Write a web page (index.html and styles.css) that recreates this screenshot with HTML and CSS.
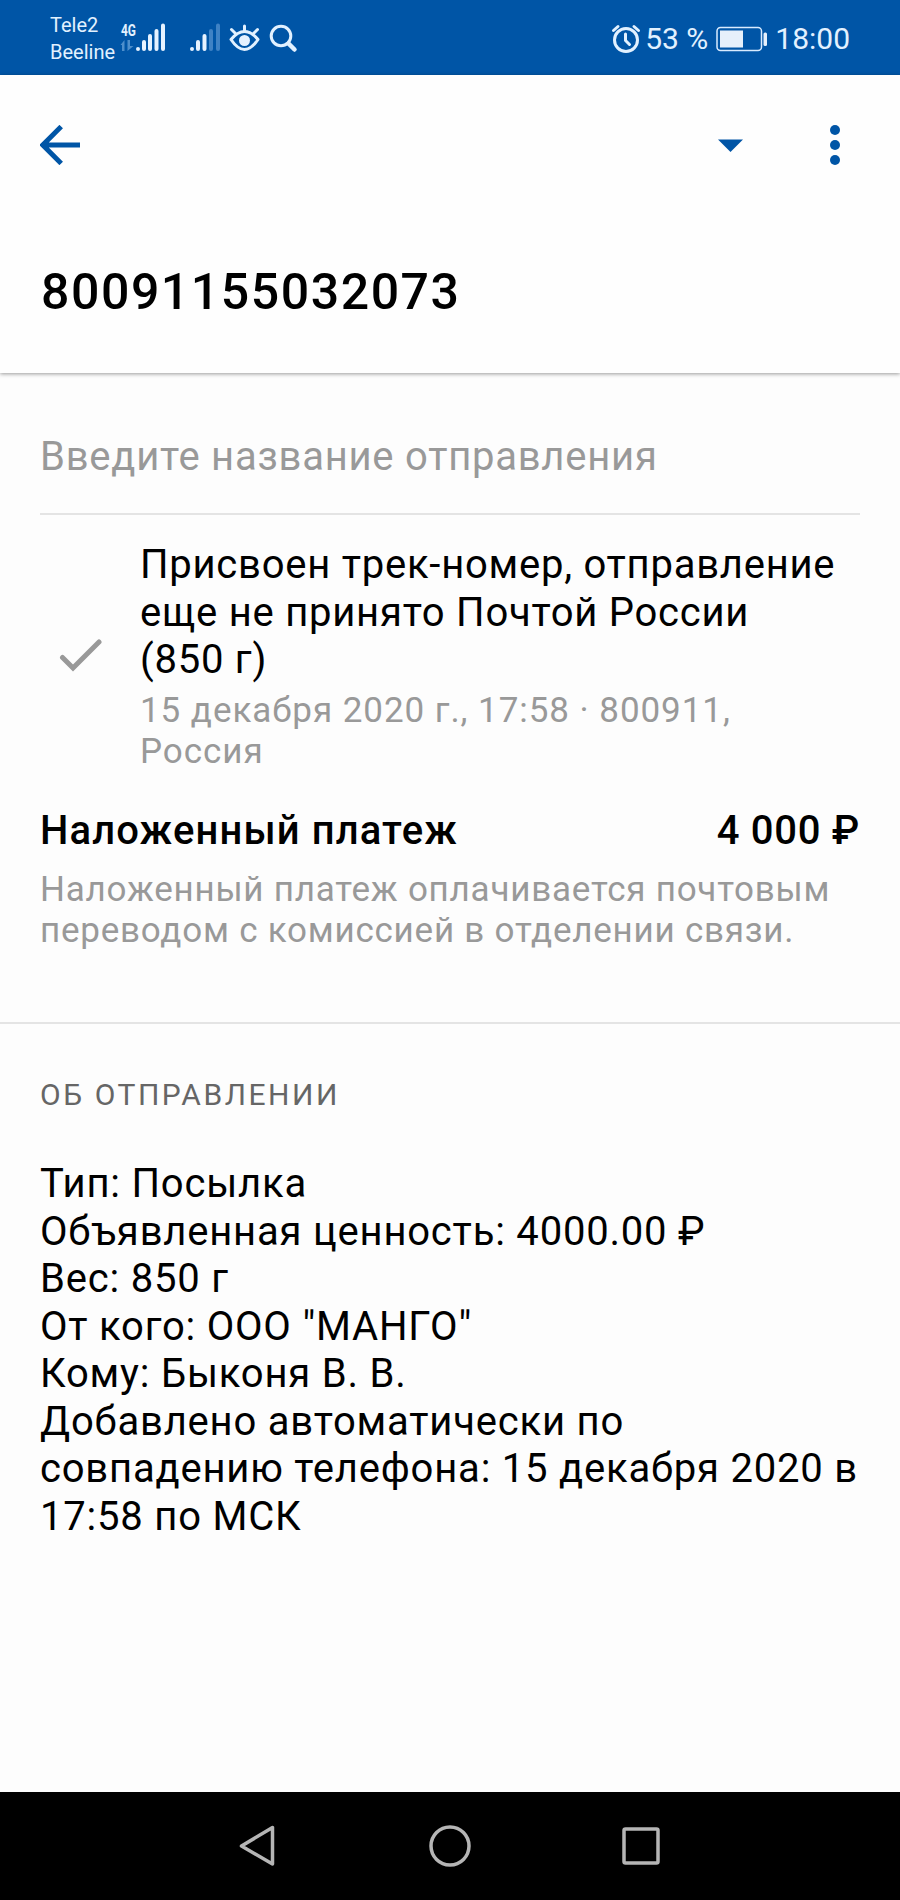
FILE: index.html
```
<!DOCTYPE html>
<html lang="ru">
<head>
  <meta charset="UTF-8" />
  <meta name="viewport" content="width=device-width, initial-scale=1.0"/>
  <title>Отправление 80091155032073</title>
  <link rel="stylesheet" href="styles.css">
</head>
<body>
  <!-- Status bar -->
  <div class="status-bar">
    <div class="carriers">
      <span>Tele2</span>
      <span>Beeline</span>
    </div>
    <svg class="status-icons" width="180" height="75" viewBox="120 0 180 75">
      <text x="121" y="36" class="net-label" textLength="15" lengthAdjust="spacingAndGlyphs">4G</text>
      <g fill="#4f8fcb">
        <path d="M120.500 45l4-5v11h-2.500v-6z"/>
        <path d="M127.500 40h2.500v6h3.500l-6 5z"/>
      </g>
      <g class="bars">
        <path d="M138 49v0M144 42v7M150 36v13M156.500 31v18M163 25.500V49"/>
        <path d="M192 49v0M198 42v7M204.500 36v13"/>
        <path class="dim" d="M211 31v18M218 25.500V49"/>
      </g>
      <g class="outline">
        <path d="M231 39.500C236 33.500 240 31.500 244.500 31.500S253 33.500 258 39.500C253 47 249 49.500 244.500 49.500S236 47 231 39.500z"/>
        <path d="M244.500 31v-5M235.500 33.500l-4-4M253.500 33.500l4-4"/>
        <circle cx="281" cy="36" r="9.800"/>
      </g>
      <circle cx="244.500" cy="40.500" r="5.500" fill="#e6f2ff"/>
      <path d="M288.500 43.500l6 6" class="handle"/>
    </svg>
    <div class="status-right">
      <svg width="30" height="32" viewBox="612 22 30 32" class="outline">
        <circle cx="627" cy="39" r="11.500"/>
        <path d="M614.500 29.500l4.500-4M639.500 29.500l-4.500-4"/>
        <path d="M626.500 33v6.500l4 4"/>
      </svg>
      <span class="percent">53 %</span>
      <svg class="battery" width="52" height="26" viewBox="716 25 52 26">
        <rect x="717" y="26.500" width="44.500" height="23" rx="3.500" fill="none" stroke="#d8ebff" stroke-width="1.500"/>
        <rect x="720" y="29.500" width="23" height="17" fill="#e6f0fb"/>
        <rect x="763.500" y="31.500" width="3.500" height="13.500" rx="1.500" fill="#e6f0fb"/>
      </svg>
      <span class="clock">18:00</span>
    </div>
  </div>

  <!-- Header -->
  <header class="header">
    <div class="toolbar">
      <svg width="40" height="40" viewBox="0 0 40 40">
        <path d="M40 20H4M21.200 1.600L2.800 20l18.400 18.400" fill="none" stroke="#0055a6" stroke-width="5"/>
      </svg>
      <div class="toolbar-actions">
        <svg width="25" height="13" viewBox="0 0 25 13"><path d="M0 0.500h25L12.500 13z" fill="#0055a6"/></svg>
        <svg width="10" height="40" viewBox="0 0 10 40" fill="#0055a6">
          <circle cx="5" cy="5" r="5"/>
          <circle cx="5" cy="20" r="5"/>
          <circle cx="5" cy="35" r="5"/>
        </svg>
      </div>
    </div>
    <h1 class="track-number">80091155032073</h1>
  </header>

  <!-- Content -->
  <main class="content">
    <div class="name-field">Введите название отправления</div>

    <div class="event">
      <svg class="check" width="44" height="34" viewBox="0 0 44 34">
        <path d="M3.500 18.500l10.500 10.500L40 3" />
      </svg>
      <div>
        <div class="text">Присвоен трек-номер, отправление<br>еще не принято Почтой России<br>(850 г)</div>
        <div class="hint event-date">15 декабря 2020 г., 17:58 · 800911,<br>Россия</div>
      </div>
    </div>

    <div class="payment">
      <span class="payment-name">Наложенный платеж</span>
      <span>4 000 ₽</span>
    </div>
    <div class="hint payment-note">Наложенный платеж оплачивается почтовым<br>переводом с комиссией в отделении связи.</div>

    <section class="about">
      <h2 class="about-title">ОБ ОТПРАВЛЕНИИ</h2>
      <div class="text">
        Тип: Посылка<br>
        Объявленная ценность: 4000.00 ₽<br>
        Вес: 850 г<br>
        От кого: ООО "МАНГО"<br>
        Кому: Быконя В. В.<br>
        Добавлено автоматически по<br>
        совпадению телефона: 15 декабря 2020 в<br>
        17:58 по МСК
      </div>
    </section>
  </main>

  <!-- Android navigation -->
  <nav class="nav-bar">
    <svg width="36" height="42" viewBox="0 0 36 42"><path d="M33.500 2.500v36.500L2.500 21z"/></svg>
    <svg width="42" height="42" viewBox="0 0 42 42"><circle cx="21" cy="21" r="19"/></svg>
    <svg width="38" height="38" viewBox="0 0 38 38"><rect x="2" y="2" width="34" height="34" rx="1.500"/></svg>
  </nav>
</body>
</html>
```
FILE: styles.css
```
* {
  box-sizing: border-box;
}

body {
  font-family: Roboto, sans-serif;
  background-color: #fdfdfd;
  margin: 0;
  height: 1900px;
  color: #000;
  display: flex;
  flex-direction: column;
  white-space: nowrap;
}

svg {
  display: block;
  flex: none;
}

.status-bar {
  background-color: #0055a6;
  color: #e2f1ff;
  height: 75px;
  padding: 0 50px 0 50px;
  display: flex;
  align-items: center;
}

.carriers {
  display: flex;
  flex-direction: column;
  width: 70px;
  font-size: 20px;
  line-height: 27px;
  padding-top: 2px;
}

.net-label {
  font-size: 17px;
  font-weight: bold;
  fill: #e2f1ff;
}

.bars {
  fill: none;
  stroke: #e6f2ff;
  stroke-width: 4;
  stroke-linecap: round;
}

.bars .dim {
  stroke: #3f82c4;
}

.outline {
  fill: none;
  stroke: #e2f1ff;
  stroke-width: 3;
  stroke-linecap: round;
  stroke-linejoin: round;
}

.handle {
  stroke: #e2f1ff;
  stroke-width: 4.5;
  stroke-linecap: round;
}

.status-right {
  margin-left: auto;
  padding-top: 2px;
  display: flex;
  align-items: center;
  font-size: 30px;
}

.percent {
  margin-left: 3px;
}

.battery {
  margin: 0 8px 0 8px;
}

.status-right .outline {
  margin-right: 1px;
}

.status-right .battery {
  margin-right: 7px;
}

.header {
  background-color: #fefefe;
  height: 298px;
  padding: 50px 40px 0;
  box-shadow: 0 1px 4px rgba(0,0,0,0.4);
}

.toolbar {
  display: flex;
  justify-content: space-between;
  align-items: center;
}

.toolbar-actions {
  display: flex;
  align-items: center;
  gap: 87px;
  padding-right: 20px;
}

.track-number {
  margin: 97px 0 0 1px;
  font-size: 50px;
  font-weight: 500;
  line-height: 60px;
  letter-spacing: 0.031em;
  font-kerning: none;
}

.content {
  flex: 1;
}

.name-field {
  margin: 0 40px;
  padding-top: 60px;
  height: 142px;
  border-bottom: 2px solid #e4e4e4;
  color: #999;
  font-size: 40px;
  line-height: 47.5px;
  letter-spacing: 0.019em;
}

.text {
  font-size: 40px;
  line-height: 47.5px;
  letter-spacing: 0.02em;
}

.hint {
  color: #999;
  font-size: 35px;
  line-height: 41px;
  letter-spacing: 0.022em;
}

.event {
  display: flex;
  align-items: center;
  padding: 26px 40px 0 59px;
}

.event .text {
  letter-spacing: 0.019em;
}

.check {
  margin-right: 37px;
  fill: none;
  stroke: #999;
  stroke-width: 5;
  stroke-linecap: round;
}

.event-date {
  margin-top: 6px;
}

.event .event-date {
  letter-spacing: 0.027em;
}

.payment {
  display: flex;
  justify-content: space-between;
  margin: 35px 40px 0;
  font-size: 40px;
  font-weight: 500;
  line-height: 47.5px;
  letter-spacing: 0.018em;
}

.payment-name {
  letter-spacing: 0.028em;
}

.payment-note {
  margin: 15px 40px 0;
}

.about {
  margin-top: 71px;
  padding: 53px 40px 0;
  border-top: 2px solid #e4e4e4;
}

.about-title {
  margin: 0 0 47px;
  color: #666;
  font-size: 30px;
  font-weight: normal;
  line-height: 36px;
  letter-spacing: 0.085em;
}

.nav-bar {
  background-color: #000;
  height: 108px;
  display: flex;
  align-items: center;
  justify-content: space-between;
  padding: 0 240px 0 239px;
}

.nav-bar svg {
  fill: none;
  stroke: #b5b5b5;
  stroke-width: 3.5;
  stroke-linejoin: round;
}

.nav-bar svg:nth-child(2) {
  margin-left: 2px;
}
```
